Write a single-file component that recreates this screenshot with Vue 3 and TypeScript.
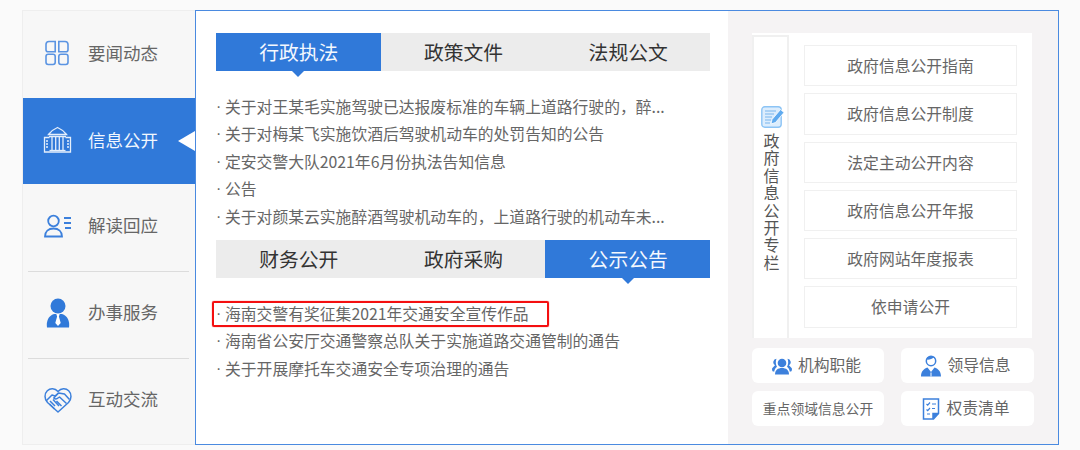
<script setup lang="ts">
import { ref } from 'vue';

const navItems = [
  { key: 'news', label: '要闻动态' },
  { key: 'open', label: '信息公开' },
  { key: 'reply', label: '解读回应' },
  { key: 'service', label: '办事服务' },
  { key: 'talk', label: '互动交流' },
];
const activeNav = ref('open');

const topTabs = ['行政执法', '政策文件', '法规公文'];
const bottomTabs = ['财务公开', '政府采购', '公示公告'];

const topNews = [
  '关于对王某毛实施驾驶已达报废标准的车辆上道路行驶的，醉...',
  '关于对梅某飞实施饮酒后驾驶机动车的处罚告知的公告',
  '定安交警大队2021年6月份执法告知信息',
  '公告',
  '关于对颜某云实施醉酒驾驶机动车的，上道路行驶的机动车未...',
];
const bottomNews = [
  '海南交警有奖征集2021年交通安全宣传作品',
  '海南省公安厅交通警察总队关于实施道路交通管制的通告',
  '关于开展摩托车交通安全专项治理的通告',
];

const specials = [
  '政府信息公开指南',
  '政府信息公开制度',
  '法定主动公开内容',
  '政府信息公开年报',
  '政府网站年度报表',
  '依申请公开',
];
</script>

<template>
  <div class="frame">
    <aside class="nav">
      <div
        v-for="item in navItems"
        :key="item.key"
        class="nav-item"
        :class="{ active: item.key === activeNav }"
      >
        <span class="nav-icon">
          <svg v-if="item.key === 'news'" width="28" height="26" viewBox="0 0 28 26" fill="none" stroke="#5b94e2" stroke-width="1.6">
            <path d="M2 4.500A3 3 0 0 1 5 1.500h6.200v10.200H4a2 2 0 0 1-2-2z" />
            <path d="M14.800 1.500H21a3 3 0 0 1 3 3v5.200a2 2 0 0 1-2 2h-7.200z" />
            <rect x="2" y="14.300" width="9.200" height="10.200" rx="2.200" />
            <rect x="14.800" y="14.300" width="9.200" height="10.200" rx="2.200" />
          </svg>
          <svg v-else-if="item.key === 'open'" width="30" height="28" viewBox="0 0 30 28" fill="none" stroke="#e4eefb" stroke-width="1.300">
            <path d="M5.500 8.500C8 5 11 3 14.500 1.500 18 3 21 5 23.500 8.500z" />
            <path d="M6 10.500h17M9 11v13M12.700 11v13M16.300 11v13M20 11v13" />
            <path d="M6.500 11.500H1.500v14.500h26V11.500h-5M1.500 26h26" />
            <path d="M3 15h2M3 18h2M3 21h2M24 15h2M24 18h2M24 21h2" />
            <path d="M6.500 24.500h16" />
          </svg>
          <svg v-else-if="item.key === 'reply'" width="28" height="24" viewBox="0 0 28 24" fill="none" stroke="#3c80dc" stroke-width="1.800">
            <circle cx="9.500" cy="7" r="5.300" />
            <path d="M1 22.500c0-5 3.400-8 8.500-8s8.500 3 8.500 8z" />
            <path d="M20 4h7M20 9h7M21 14h6" />
          </svg>
          <svg v-else-if="item.key === 'service'" width="24" height="30" viewBox="0 0 24 30">
            <circle cx="12" cy="8" r="7.500" fill="#3079d9" />
            <path d="M1 29.500c-1-6 1.500-12 7-13.500h8c5.500 1.500 8 7.500 7 13.500z" fill="#3079d9" />
            <path d="M10.300 16h3.400l-.8 2.500 1.800 6.500-2.700 3-2.700-3 1.800-6.500z" fill="#fff" />
          </svg>
          <svg v-else width="28" height="26" viewBox="0 0 28 26" fill="none" stroke="#3c80dc" stroke-width="1.500" stroke-linejoin="round">
            <path d="M14 25 3.500 15.500C.2 12 .3 6.800 3.300 3.800c3-2.800 7.500-2.700 10.700.7 3.200-3.400 7.700-3.500 10.700-.7 3 3 3.100 8.200-.2 11.700z" />
            <path d="M2.500 13.500 8 8l3 1 3.500-3 6 1 5 5.500" />
            <path d="M14.500 6 9.800 11c1.200 1.400 3 1.200 4.200 0l1.500-1 7 6.500" />
            <path d="m6 14 5 5M9 12.500l6 6.500M5.500 17l5 5M12.500 14l5 5" />
          </svg>
        </span>
        <span class="nav-label">{{ item.label }}</span>
      </div>
    </aside>

    <main class="main">
      <section class="news">
        <div class="tabs">
          <div v-for="(tab, i) in topTabs" :key="tab" class="tab" :class="{ on: i === 0 }">{{ tab }}</div>
        </div>
        <ul class="list first">
          <li v-for="row in topNews" :key="row">{{ row }}</li>
        </ul>

        <div class="tabs">
          <div v-for="(tab, i) in bottomTabs" :key="tab" class="tab" :class="{ on: i === 2 }">{{ tab }}</div>
        </div>
        <ul class="list">
          <li v-for="(row, i) in bottomNews" :key="row" :class="{ marked: i === 0 }">{{ row }}</li>
        </ul>
      </section>

      <section class="side">
        <div class="special">
          <div class="special-title">
            <svg width="24" height="22" viewBox="0 0 24 22">
              <rect x=".8" y=".8" width="19.400" height="20.400" rx="3" fill="#dcedfd" stroke="#8cc4f5" stroke-width="1.400" />
              <path d="M4 5h11M4 8h9M4 11h7M4 14h6M4 17h5" stroke="#79b6ee" stroke-width="1.200" />
              <path d="m19.500 3.500 3.500 3-8.500 10-4.500 1.500 1-4.500z" fill="#5faaef" stroke="#fff" stroke-width=".8" />
            </svg>
            <span class="special-text">政府信息公开专栏</span>
          </div>
          <div class="special-links">
            <div v-for="link in specials" :key="link" class="special-link">{{ link }}</div>
          </div>
        </div>

        <div class="shortcuts">
          <div class="shortcut">
            <svg width="20" height="18" viewBox="0 0 20 18" fill="#3c80dc">
              <circle cx="10" cy="6" r="4.300" />
              <path d="M3 17.500c0-4.500 3-6.500 7-6.500s7 2 7 6.500z" />
              <path d="M4.500 1.800a3.500 3.500 0 0 0-1.500 6.500L.2 11.300c-.4 1 .1 2.700.8 3.200h1.300c.2-2 1.200-3.800 2.700-4.800-1.300-2-1.600-5.200-.5-7.900zM15.500 1.800a3.500 3.500 0 0 1 1.500 6.500l2.800 3c.4 1-.1 2.700-.8 3.200h-1.300c-.2-2-1.200-3.800-2.700-4.800 1.300-2 1.600-5.200.5-7.900z" />
            </svg>
            <span>机构职能</span>
          </div>
          <div class="shortcut">
            <svg width="20" height="22" viewBox="0 0 20 22">
              <circle cx="10" cy="6" r="4.700" fill="#fff" stroke="#3c80dc" stroke-width="1.500" />
              <path d="M5.500 4.500C8 5 11 4 13 2.500l1.500 2.500-.5-3-4-1-4 1.500z" fill="#3c80dc" />
              <path d="M0 21.500c0-5 2.500-7.500 6.500-9L10 17l3.500-4.500c4 1.500 6.500 4 6.500 9z" fill="#3c80dc" />
              <path d="M10 17.500v4" stroke="#fff" stroke-width="1" />
            </svg>
            <span>领导信息</span>
          </div>
          <div class="shortcut small">重点领域信息公开</div>
          <div class="shortcut">
            <svg width="18" height="22" viewBox="0 0 18 22" fill="none" stroke="#3c80dc" stroke-width="1.500">
              <path d="M1.500 1h15v14.500l-5 5.500h-10z" />
              <path d="M11 21v-5.500h5.500" fill="#3c80dc" />
              <path d="M4.500 6l1.200 1.200L8 4.500M10 6h4M4.500 11.500l1.200 1.200L8 10M10 10.500h3M5 16h3" stroke-width="1.200" />
            </svg>
            <span>权责清单</span>
          </div>
        </div>
      </section>
    </main>
  </div>
</template>

<style scoped>
.frame {
  display: flex;
  width: 1036px;
  height: 435px;
  margin: 10px 0 0 22px;
  font-family: "Noto Sans CJK SC", "Noto Sans", sans-serif;
}

.nav {
  width: 173px;
  flex: none;
  box-sizing: border-box;
  background: #f7f7f7;
  border: 1px solid #eeeeee;
  border-right: 0;
}

.nav-item {
  position: relative;
  display: flex;
  align-items: center;
  height: 86px;
  padding-left: 20px;
  margin-bottom: 1px;
  color: #666;
  font-size: 17.500px;
}

.nav-item.active {
  background: #3079d9;
  color: #f2f7fe;
}

.nav-item.active::after {
  content: "";
  position: absolute;
  right: 0;
  top: 33px;
  border-top: 10px solid transparent;
  border-bottom: 10px solid transparent;
  border-right: 17px solid #fff;
}

.nav-item:nth-child(3)::after,
.nav-item:nth-child(4)::after {
  content: "";
  position: absolute;
  left: 5px;
  right: 6px;
  bottom: -1px;
  height: 1px;
  background: #dcdcdc;
}

.nav-icon {
  display: flex;
  justify-content: center;
  width: 30px;
  margin-right: 15px;
  margin-bottom: 2px;
}

.nav-label {
  margin-bottom: 3px;
}

.nav-item:nth-child(n + 3) .nav-icon {
  margin-bottom: 4px;
}

.nav-item:nth-child(n + 3) .nav-label {
  margin-bottom: 7px;
}

.main {
  flex: 1;
  display: flex;
  box-sizing: border-box;
  border: 1px solid #4a8ae0;
  background: #f5f3f4;
}

.news {
  width: 532px;
  box-sizing: border-box;
  padding: 22px 18px 0 20px;
  background: #fff;
}

.tabs {
  display: flex;
  height: 38px;
  background: #ececec;
}

.tab {
  position: relative;
  flex: 1;
  text-align: center;
  color: #333;
  font-size: 19.800px;
  line-height: 38px;
  text-indent: 1px;
}

.tab.on {
  background: #3079d9;
  color: #f4f8fe;
}

.tab.on::after {
  content: "";
  position: absolute;
  left: 50%;
  top: 38px;
  margin-left: -6px;
  border-left: 6px solid transparent;
  border-right: 6px solid transparent;
  border-top: 6px solid #3079d9;
}

.list {
  list-style: none;
  margin: 0;
  padding: 22px 0 0;
  color: #666;
  font-size: 15.800px;
  line-height: 27.400px;
  white-space: nowrap;
}

.list.first {
  height: 169px;
  box-sizing: border-box;
}

.list li {
  position: relative;
  display: flex;
}

.list li::before {
  content: "·";
  width: 9px;
  font-family: "Liberation Sans", sans-serif;
}

.marked::after {
  content: "";
  position: absolute;
  left: -4px;
  top: 1px;
  width: 333px;
  height: 22px;
  border: 2px solid #f40f10;
  border-radius: 2px;
  box-shadow: 0 0 1px #f40f10;
}

.side {
  flex: 1;
  box-sizing: border-box;
  padding: 22px 24px 0;
}

.special {
  display: flex;
  width: 280px;
  height: 305px;
  background: #fff;
}

.special-title {
  width: 37px;
  box-sizing: border-box;
  display: flex;
  flex-direction: column;
  align-items: center;
  padding: 69px 0 0 5px;
  margin-top: 2px;
  border: 2px solid #f0f0f0;
  border-bottom: 0;
}

.special-text {
  writing-mode: vertical-rl;
  margin: 5px 3px 0 0;
  color: #555;
  font-size: 16px;
  letter-spacing: 1.400px;
}

.special-links {
  flex: 1;
  display: flex;
  flex-direction: column;
  gap: 7px;
  padding: 12px 15px 0;
}

.special-link {
  height: 41.300px;
  box-sizing: border-box;
  border: 1px solid #f0f0f0;
  color: #666;
  font-size: 15.800px;
  line-height: 39px;
  text-align: center;
}

.shortcuts {
  display: grid;
  grid-template-columns: 132px 133px;
  column-gap: 17px;
  row-gap: 8px;
  margin-top: 10px;
}

.shortcut {
  display: flex;
  align-items: center;
  justify-content: center;
  gap: 6px;
  height: 35px;
  box-sizing: border-box;
  padding-right: 3px;
  background: #fff;
  border-radius: 6px;
  color: #666;
  font-size: 15.800px;
}

.shortcut span {
  margin-bottom: 2px;
}

.shortcut.small {
  font-size: 13.800px;
  padding: 0 0 2px;
}
</style>

<style>
html,
body {
  margin: 0;
  background: #fafafa;
  overflow: hidden;
}
</style>
